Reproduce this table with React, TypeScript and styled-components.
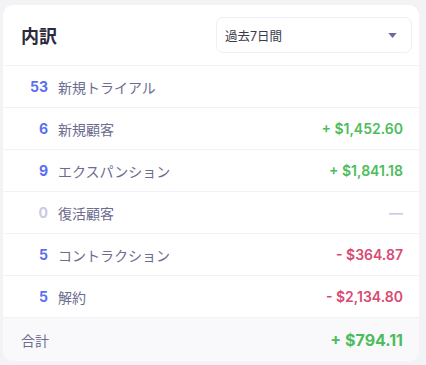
import styled, { createGlobalStyle } from 'styled-components';

interface Item {
  count: number;
  label: string;
  amount: string;
  kind: 'up' | 'down' | 'none';
}

const ITEMS: Item[] = [
  { count: 53, label: '新規トライアル', amount: '', kind: 'none' },
  { count: 6, label: '新規顧客', amount: '+ $1,452.60', kind: 'up' },
  { count: 9, label: 'エクスパンション', amount: '+ $1,841.18', kind: 'up' },
  { count: 0, label: '復活顧客', amount: '—', kind: 'none' },
  { count: 5, label: 'コントラクション', amount: '- $364.87', kind: 'down' },
  { count: 5, label: '解約', amount: '- $2,134.80', kind: 'down' },
];

const App = () => {
  return (
    <>
      <GlobalStyle />
      <Card>
        <Header>
          <Title>内訳</Title>
          <Select>
            過去7日間
            <Caret viewBox="0 0 10 6">
              <path d="M0 0h10L5 6z" fill="currentColor" />
            </Caret>
          </Select>
        </Header>
        {ITEMS.map((item) => (
          <Row key={item.label}>
            <Count $zero={item.count === 0}>{item.count}</Count>
            <Label>{item.label}</Label>
            {item.amount && <Amount $kind={item.kind}>{item.amount}</Amount>}
          </Row>
        ))}
        <Footer>
          <FooterLabel>合計</FooterLabel>
          <Total>+ $794.11</Total>
        </Footer>
      </Card>
    </>
  );
};

export default App;

const GlobalStyle = createGlobalStyle`
  body {
    margin: 0;
    background: #f3f3f6;
    font-family: Inter, "Noto Sans CJK JP", sans-serif;
  }
`;

const Card = styled.div`
  width: 416px;
  margin: 5px 0 0 3px;
  background: #ffffff;
  border-radius: 10px;
  overflow: hidden;
`;

const Header = styled.div`
  display: flex;
  align-items: center;
  justify-content: space-between;
  height: 61px;
  padding: 0 7px 0 18px;
  box-sizing: border-box;
  border-bottom: 1px solid #f2f2f8;
`;

const Title = styled.h2`
  margin: 0;
  font-size: 18px;
  font-weight: 700;
  color: #2b2b3c;
`;

const Select = styled.div`
  display: flex;
  align-items: center;
  justify-content: space-between;
  width: 196px;
  height: 36px;
  padding: 0 14px 0 8px;
  box-sizing: border-box;
  border: 1px solid #efeff6;
  border-radius: 7px;
  font-size: 12.5px;
  color: #3a3a4c;
`;

const Caret = styled.svg`
  width: 9px;
  height: 5px;
  color: #6a6a9c;
`;

const Row = styled.div`
  display: flex;
  align-items: center;
  height: 42px;
  padding: 0 16px 0 15px;
  box-sizing: border-box;
  border-bottom: 1px solid #f2f2f8;
  &:last-of-type {
    border-bottom: none;
  }
`;

const Count = styled.span<{ $zero: boolean }>`
  width: 30px;
  text-align: right;
  font-size: 14px;
  font-weight: 700;
  color: ${(p) => (p.$zero ? '#c9c9e3' : '#5b6ef2')};
`;

const Label = styled.span`
  margin-left: 10px;
  flex: 1;
  font-size: 14px;
  color: #6c6c90;
`;

const Amount = styled.span<{ $kind: Item['kind'] }>`
  font-size: 14px;
  font-weight: 600;
  color: ${(p) =>
    p.$kind === 'up' ? '#4cbc5c' : p.$kind === 'down' ? '#d94a72' : '#c9c9e3'};
`;

const Footer = styled.div`
  display: flex;
  align-items: center;
  justify-content: space-between;
  height: 43px;
  padding: 0 16px 0 18px;
  background: #f9f9fc;
`;

const FooterLabel = styled.span`
  font-size: 14px;
  color: #6c6c90;
`;

const Total = styled.span`
  font-size: 16px;
  font-weight: 700;
  color: #4cbc5c;
`;
